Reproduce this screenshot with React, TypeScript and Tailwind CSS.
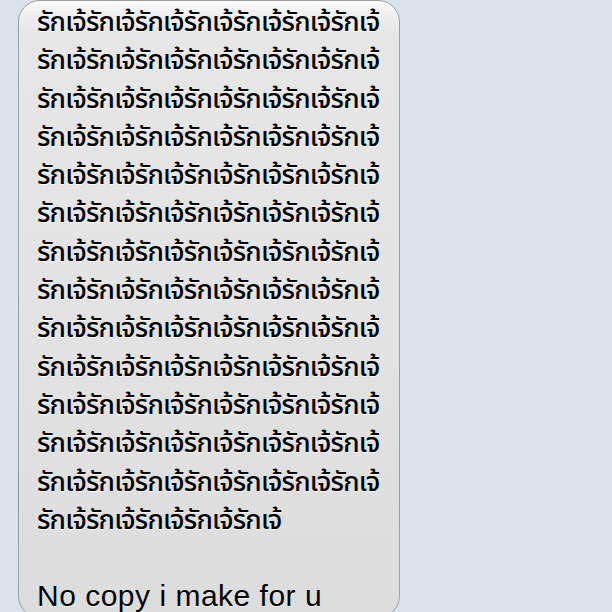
const thaiLines: string[] = [
  ...Array.from({ length: 13 }, () => 'รักเจ้'.repeat(7)),
  'รักเจ้'.repeat(5),
];

const App = () => {
  return (
    <div className="h-[612px] w-[612px] overflow-hidden bg-[#dbe2ec]">
      <div className="ml-[18px] mt-0 h-[618px] w-[382px] rounded-[22px] border border-[#9a9da1] bg-[linear-gradient(to_bottom,#fbfbfb_0px,#efefef_14px,#e6e6e6_34px,#e3e3e3_50%,#dcdcdc_100%)] pl-[18px] pt-[3px] shadow-[inset_0_1px_1px_#ffffff] [text-shadow:0_1px_0_rgba(255,255,255,0.8)]">
        <div className="font-['Noto_Sans_Thai','Noto_Sans','DejaVu_Sans',sans-serif] text-[27px] font-medium leading-[38.3px] tracking-[-0.8px] text-black">
          {thaiLines.map((line, i) => (
            <div key={i} className="whitespace-nowrap">
              {line}
            </div>
          ))}
        </div>
        <div className="mt-[37px] whitespace-nowrap font-['Liberation_Sans',Arial,sans-serif] text-[30px] leading-[38px] tracking-[0.5px] text-black">
          No copy i make for u
        </div>
      </div>
    </div>
  );
};

export default App;
